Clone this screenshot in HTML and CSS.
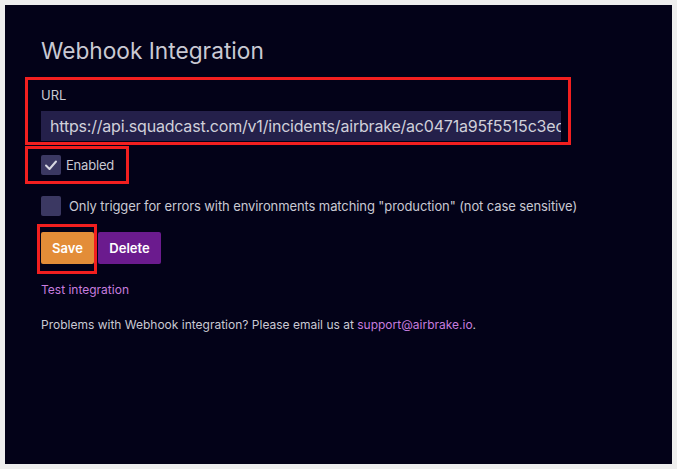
FILE: index.html
```html
<!DOCTYPE html>
<html>
<head>
<meta charset="utf-8">
<link rel="stylesheet" href="styles.css">
</head>
<body>
<div class="panel">
  <h1 class="title">Webhook Integration</h1>
  <div class="mark url-box">
    <div class="label">URL</div>
    <div class="input"><span class="input-text">https://api.squadcast.com/v1/incidents/airbrake/ac0471a95f5515c3ec</span></div>
  </div>
  <div class="mark enabled-box">
    <span class="check checked"><svg width="20" height="20" viewBox="0 0 20 20"><path d="M5 10.5 L8.5 14 L15 6.5" fill="none" stroke="#d8d8e2" stroke-width="2" stroke-linecap="round" stroke-linejoin="round"/></svg></span>
    <span class="check-label">Enabled</span>
  </div>
  <div class="row-env">
    <span class="check"></span>
    <span class="env-label">Only trigger for errors with environments matching "production" (not case sensitive)</span>
  </div>
  <div class="buttons">
    <div class="mark save-box"><span class="btn save">Save</span></div>
    <span class="btn delete">Delete</span>
  </div>
  <a class="link test">Test integration</a>
  <p class="note">Problems with Webhook integration? Please email us at <a class="link">support@airbrake.io</a>.</p>
</div>
</body>
</html>
```
FILE: styles.css
```css
* { box-sizing: border-box; }
html, body { margin: 0; padding: 0; }
body {
  background: #eeeeee;
  padding: 5px;
  width: 677px;
  height: 469px;
  font-family: Inter, "Noto Sans", sans-serif;
  color: #c9c9d3;
}
.panel {
  background: #030218;
  width: 667px;
  height: 459px;
  padding: 33px 0 0 36px;
  display: flex;
  flex-direction: column;
  align-items: flex-start;
}
.title {
  margin: 0;
  font-size: 22.7px;
  line-height: 26px;
  font-weight: 400;
  color: #c9c9d3;
}
.mark { border: 3px solid #f21f1f; }
.url-box {
  margin: 13px 0 0 -16px;
  width: 546px;
  padding: 7px 7px 1px 13px;
}
.label {
  font-size: 13px;
  line-height: 16px;
}
.input {
  margin-top: 8px;
  width: 520px;
  height: 30px;
  background: #24204a;
  padding: 0 9px;
  overflow: hidden;
  white-space: nowrap;
  display: flex;
  align-items: center;
}
.input-text {
  font-size: 16px;
  letter-spacing: -0.2px;
  color: #d0d0da;
}
.enabled-box {
  margin: 1px 0 0 -16px;
  width: 104px;
  height: 38px;
  padding: 0 0 0 13px;
  display: flex;
  align-items: center;
  gap: 5px;
}
.check {
  width: 20px;
  height: 20px;
  background: #3b3862;
  border-radius: 2px;
  display: inline-flex;
  flex: none;
}
.check-label, .env-label {
  font-size: 13px;
  line-height: 16px;
}
.check-label { letter-spacing: -0.2px; }
.env-label { letter-spacing: -0.1px; }
.row-env {
  margin-top: 12px;
  display: flex;
  align-items: center;
  gap: 8px;
}
.buttons {
  margin: 8px 0 0 -4px;
  display: flex;
  align-items: center;
  gap: 1px;
}
.save-box {
  width: 60px;
  height: 50px;
  padding: 5px 0 0 1px;
}
.btn {
  height: 32px;
  display: inline-flex;
  align-items: center;
  justify-content: center;
  font-size: 13px;
  font-weight: 600;
  color: #ffffff;
  border-radius: 2px;
}
.save { width: 53px; background: #e38d38; }
.delete { width: 63px; background: #6b1b8e; margin-top: -2px; }
.link { color: #c77ddf; text-decoration: none; }
.test {
  margin-top: 8px;
  font-size: 12px;
  line-height: 15px;
}
.note {
  margin: 20px 0 0;
  font-size: 12px;
  line-height: 15px;
}
```
